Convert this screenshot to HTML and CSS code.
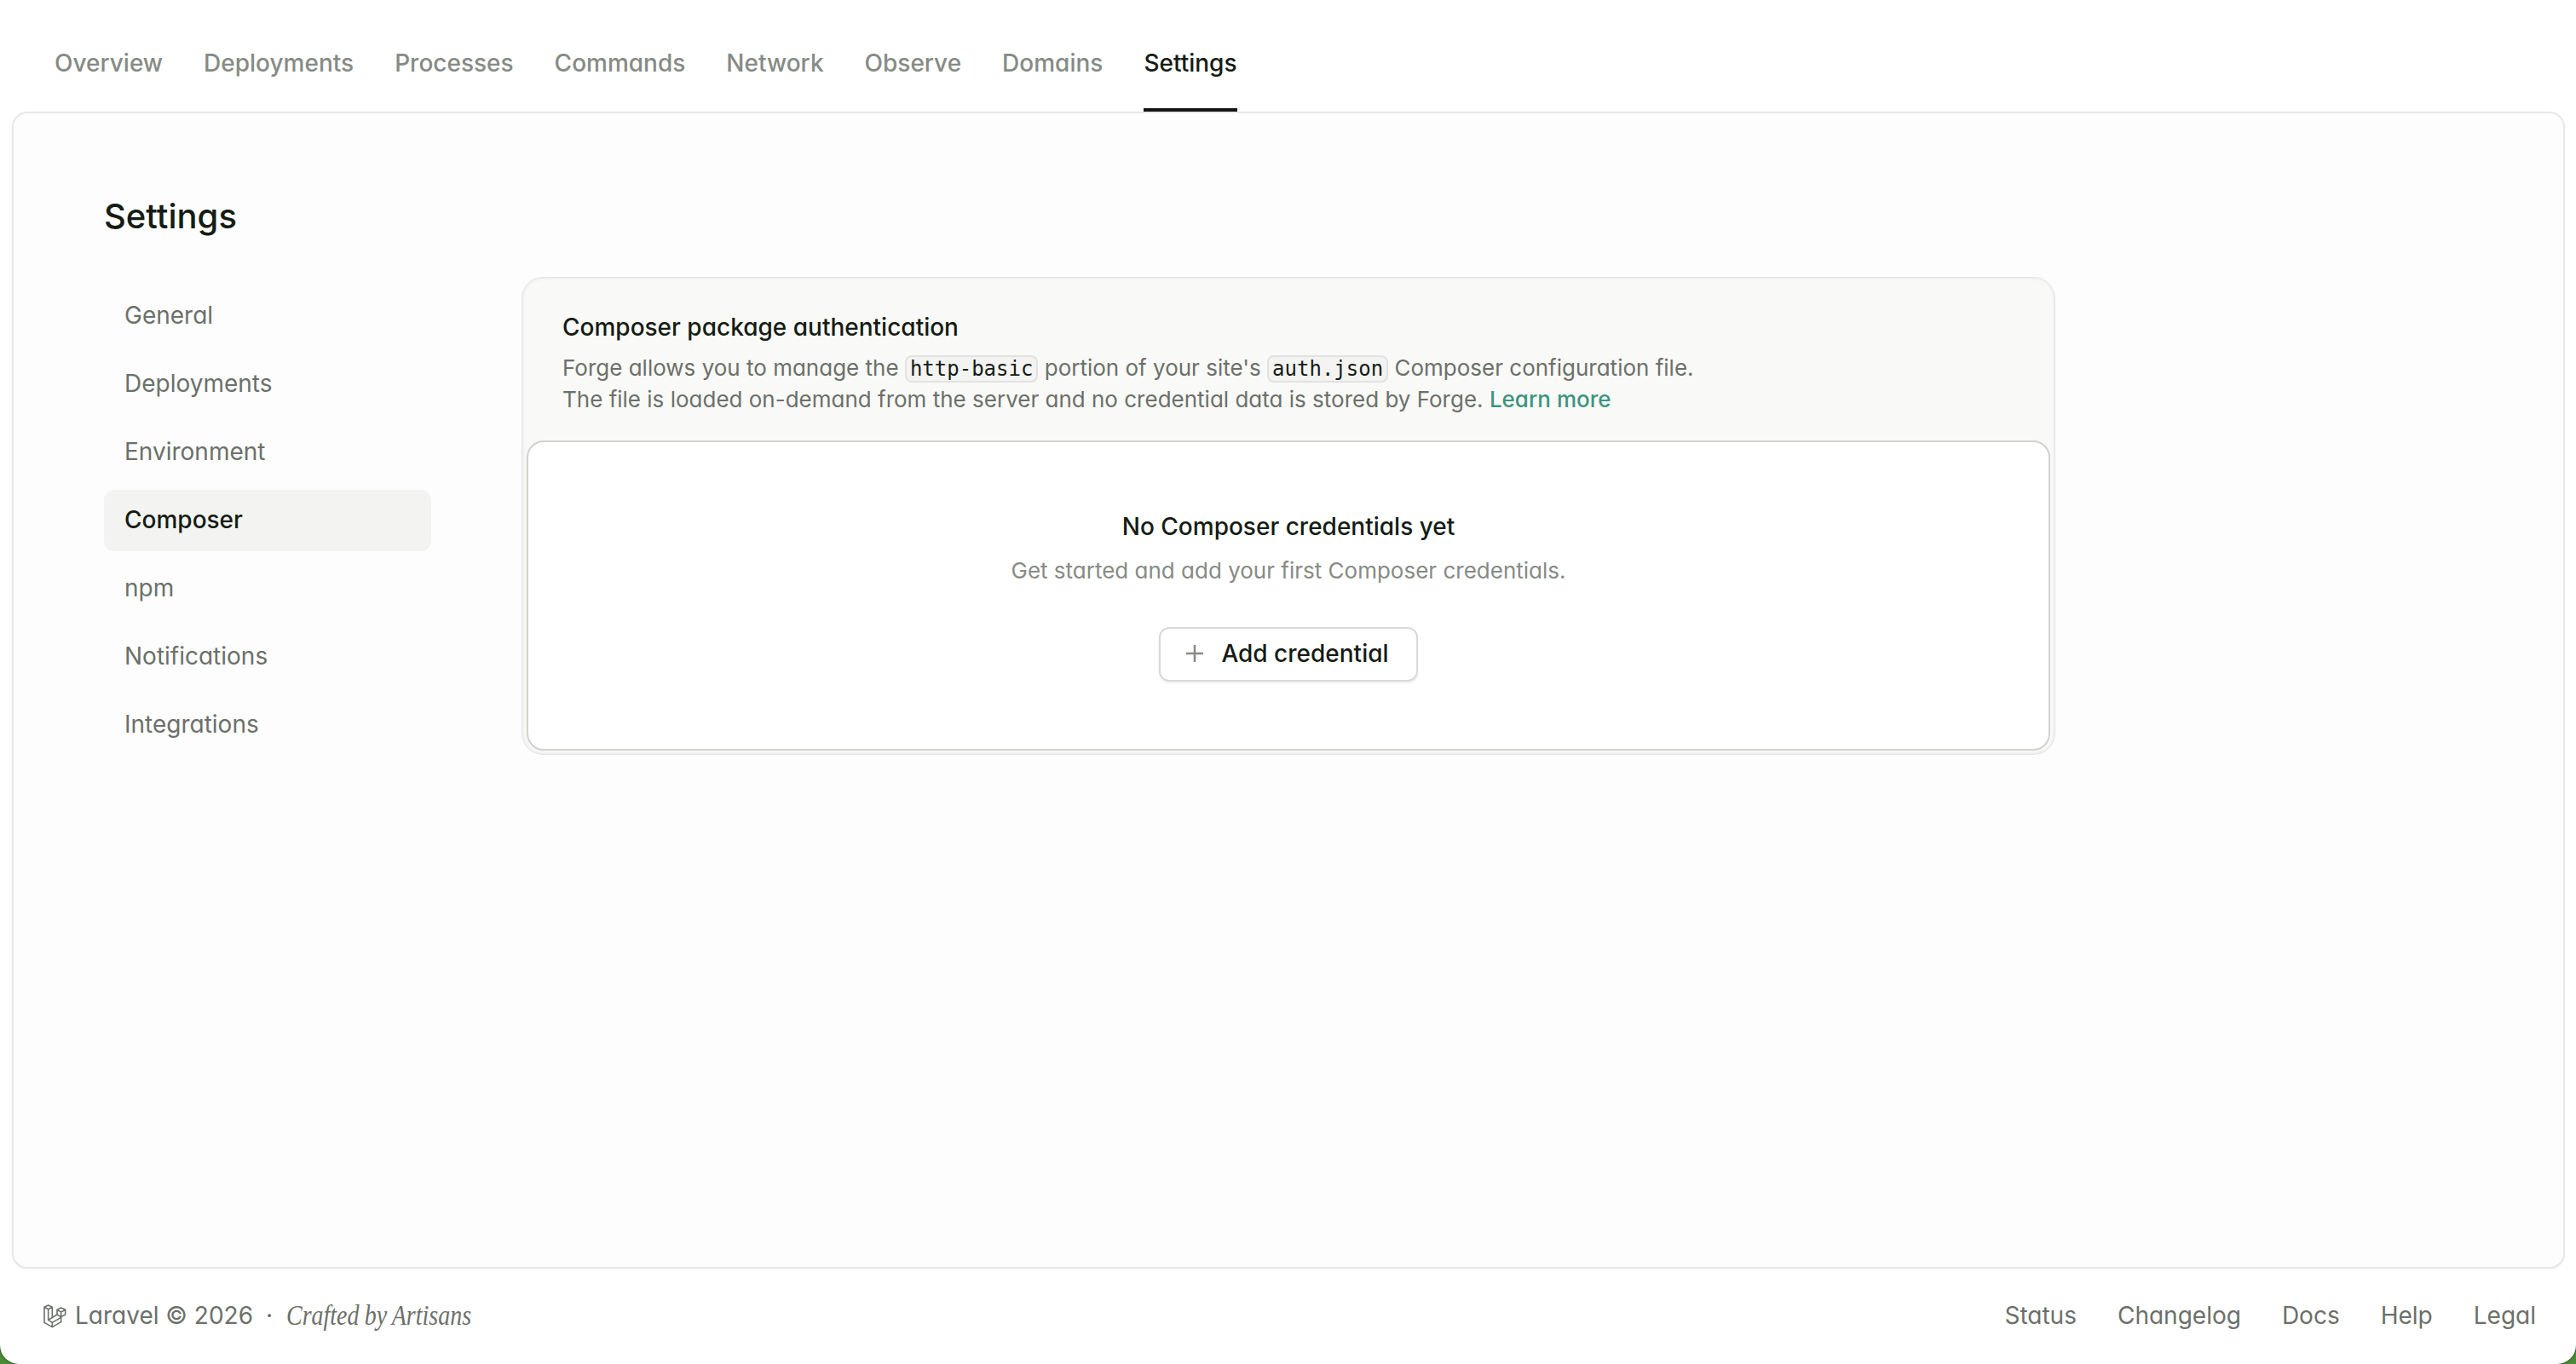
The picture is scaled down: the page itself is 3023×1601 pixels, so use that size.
FILE: index.html
```html
<!DOCTYPE html>
<html lang="en">
<head>
    <meta charset="UTF-8">
    <title>Settings - Composer</title>
    <link rel="stylesheet" href="styles.css">
</head>
<body>
<div class="window">
    <nav class="tabs">
        <a class="tab">Overview</a>
        <a class="tab">Deployments</a>
        <a class="tab">Processes</a>
        <a class="tab">Commands</a>
        <a class="tab">Network</a>
        <a class="tab">Observe</a>
        <a class="tab">Domains</a>
        <a class="tab active">Settings</a>
    </nav>
    <main class="panel">
        <h1 class="page-title">Settings</h1>
        <div class="columns">
            <aside class="side">
                <a class="side-link">General</a>
                <a class="side-link">Deployments</a>
                <a class="side-link">Environment</a>
                <a class="side-link active">Composer</a>
                <a class="side-link">npm</a>
                <a class="side-link">Notifications</a>
                <a class="side-link">Integrations</a>
            </aside>
            <section class="card">
                <div class="card-head">
                    <h2 class="card-title">Composer package authentication</h2>
                    <p class="card-text">Forge allows you to manage the <code class="chip">http-basic</code> portion of your site's <code class="chip">auth.json</code> Composer configuration file.<br>The file is loaded on-demand from the server and no credential data is stored by Forge. <a class="more">Learn more</a></p>
                </div>
                <div class="card-body">
                    <h3 class="empty-title">No Composer credentials yet</h3>
                    <p class="empty-text">Get started and add your first Composer credentials.</p>
                    <button class="btn" type="button">
                        <svg class="plus" viewBox="0 0 20 20"><path d="M10 0v20M0 10h20"/></svg>
                        <span>Add credential</span>
                    </button>
                </div>
            </section>
        </div>
    </main>
    <footer class="footer">
        <div class="brand">
            <svg class="logo" viewBox="33 63 84 84">
                <path d="M36 73l14-7 14 7-14 7zM36 73v54l28 16 31-18v-19M50 80v38l14 9 31-18M64 73v36M50 118l31-19M64 127v16"/>
                <path d="M81 82l14-7 15 7-15 8zM81 82v17l14 8 15-8V82M95 90v17"/>
            </svg>
            <span>Laravel © 2026</span>
            <span class="dot">·</span>
            <span class="crafted">Crafted by Artisans</span>
        </div>
        <div class="links">
            <a>Status</a>
            <a>Changelog</a>
            <a>Docs</a>
            <a>Help</a>
            <a>Legal</a>
        </div>
    </footer>
</div>
</body>
</html>
```
FILE: styles.css
```css
* {
    box-sizing: border-box;
}

html {
    background-color: #4a8b35;
}

body {
    margin: 0;
    font-family: Inter, "Liberation Sans", sans-serif;
    font-size: 28px;
    font-feature-settings: "cv11";
    color: #151c14;
}

h1, h2, h3, p {
    margin: 0;
    font-weight: 500;
}

.window {
    display: flex;
    flex-direction: column;
    height: 1601px;
    background-color: #FFFFFF;
    border-radius: 0 0 22px 22px;
    box-shadow: 0 0 2px #000000;
}

.tabs {
    display: flex;
    gap: 48px;
    height: 131px;
    padding-left: 64px;
}

.tab {
    padding-top: 57px;
    line-height: 34px;
    font-weight: 500;
    color: #868b85;
}

.tab.active {
    color: #151c14;
    border-bottom: 4px solid #151515;
}

.panel {
    height: 1358px;
    margin: 0 13px 0 14px;
    padding: 97px 0 0 106px;
    background-color: #FDFDFD;
    border: 2px solid #e7e8e7;
    border-radius: 18px;
    box-shadow: 0 1px 3px rgba(0, 0, 0, 0.05);
}

.page-title {
    margin-bottom: 47px;
    font-size: 40px;
    line-height: 48px;
}

.columns {
    display: flex;
    align-items: flex-start;
    gap: 106px;
}

.side {
    display: flex;
    flex-direction: column;
    gap: 8px;
    width: 384px;
    margin-top: 10px;
}

.side-link {
    height: 72px;
    padding-left: 24px;
    line-height: 70px;
    color: #6b706a;
    border-radius: 12px;
}

.side-link.active {
    font-weight: 500;
    color: #151c14;
    background-color: #f3f3f1;
}

.card {
    width: 1800px;
    padding: 0 5px 4px;
    background-color: #f9f9f7;
    border: 1px solid #e4e5e3;
    border-radius: 25px;
    box-shadow: inset 0 0 4px rgba(0, 0, 0, 0.09);
}

.card-head {
    height: 191px;
    padding: 38px 0 0 42px;
}

.card-title {
    margin-bottom: 9px;
    font-size: 28px;
    line-height: 40px;
}

.card-text {
    font-size: 26px;
    font-weight: 400;
    line-height: 37px;
    color: #6b706a;
    white-space: nowrap;
}

.chip {
    padding: 0 4px;
    font-family: "DejaVu Sans Mono", monospace;
    font-size: 24px;
    line-height: 1;
    color: #151c14;
    background-color: #f3f3f2;
    border: 2px solid #e2e3e1;
    border-radius: 8px;
}

.more {
    font-weight: 500;
    color: #3d9480;
}

.card-body {
    display: flex;
    flex-direction: column;
    align-items: center;
    height: 364px;
    padding-top: 79px;
    background-color: #FFFFFF;
    border: 2px solid #cfd3cd;
    border-radius: 20px;
}

.empty-title {
    margin-bottom: 13px;
    font-size: 28px;
    line-height: 40px;
}

.empty-text {
    margin-bottom: 48px;
    font-size: 26px;
    font-weight: 400;
    line-height: 37px;
    color: #868b85;
}

.btn {
    display: flex;
    align-items: center;
    gap: 21px;
    height: 64px;
    padding: 0 32px 2px 30px;
    font: inherit;
    font-weight: 500;
    color: #151c14;
    background-color: #FFFFFF;
    border: 2px solid #d9dad8;
    border-radius: 12px;
    box-shadow: 0 2px 3px rgba(0, 0, 0, 0.06);
}

.plus {
    width: 20px;
    height: 20px;
    fill: none;
    stroke: #868b85;
    stroke-width: 2.5;
}

.footer {
    display: flex;
    justify-content: space-between;
    align-items: center;
    height: 110px;
    padding: 0 47px 0 51px;
    color: #6b706a;
}

.brand,
.links {
    display: flex;
    align-items: center;
}

.links {
    gap: 48px;
}

.logo {
    width: 28px;
    height: 28px;
    margin: 2px 9px 0 0;
    fill: none;
    stroke: #6b706a;
    stroke-width: 4.8;
    stroke-linejoin: round;
}

.dot {
    margin: 0 16px 0 15px;
}

/* condensed italic */
.crafted {
    font-family: "Liberation Serif", serif;
    font-size: 34px;
    font-style: italic;
    word-spacing: -1px;
    transform: scaleX(0.823);
    transform-origin: left;
}
```
